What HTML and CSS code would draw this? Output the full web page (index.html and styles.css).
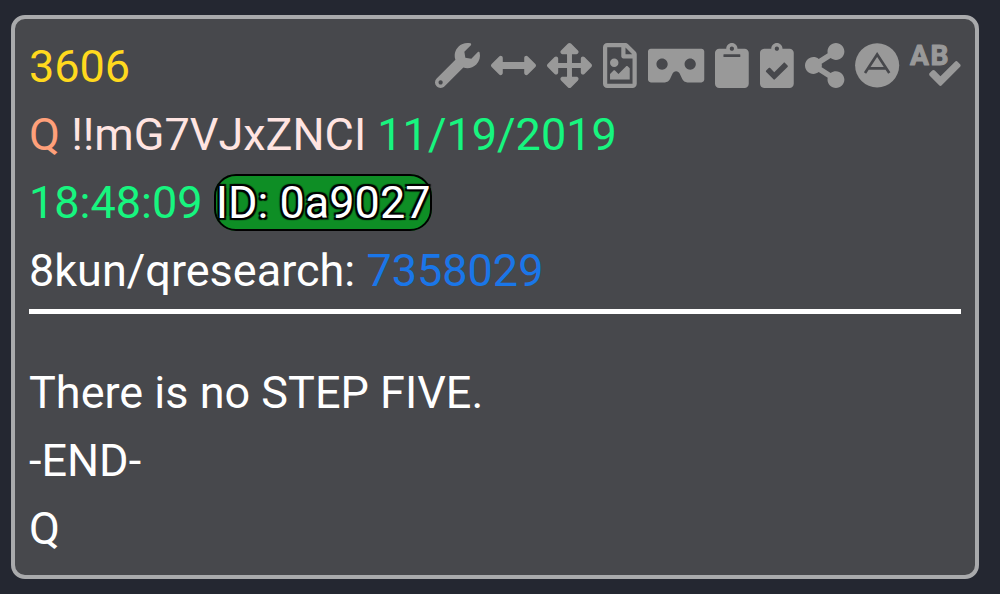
FILE: index.html
```html
<!DOCTYPE html>
<html lang="en">
<head>
    <meta charset="UTF-8">
    <meta name="viewport" content="width=device-width, initial-scale=1.0">
    <title>3606</title>
    <link rel="stylesheet" href="styles.css">
</head>
<body>
    <article class="post">
        <header class="post-header">
            <div class="title-row">
                <span class="number">3606</span>
                <div class="tools">
                    <button type="button" class="tool" aria-label="Tools">
                        <svg viewBox="0 0 512 512"><path d="M507.73 109.1c-2.24-9.03-13.54-12.09-20.12-5.51l-74.36 74.36-67.88-11.31-11.31-67.88 74.36-74.36c6.62-6.62 3.43-17.9-5.66-20.16-47.38-11.74-99.55.91-136.58 37.93-39.64 39.64-50.55 97.1-34.05 147.2L18.74 402.76c-24.99 24.99-24.99 65.51 0 90.5 24.99 24.99 65.51 24.99 90.5 0l213.21-213.21c50.12 16.71 107.47 5.68 147.37-34.22 37.07-37.07 49.7-89.32 37.91-136.73zM64 472c-13.25 0-24-10.75-24-24 0-13.26 10.75-24 24-24s24 10.74 24 24c0 13.25-10.75 24-24 24z"/></svg>
                    </button>
                    <button type="button" class="tool" aria-label="Widen">
                        <svg viewBox="0 0 512 512"><path d="M377.941 169.941V216H134.059v-46.059c0-21.382-25.851-32.09-40.971-16.971L7.029 239.029c-9.373 9.373-9.373 24.568 0 33.941l86.059 86.059c15.119 15.119 40.971 4.411 40.971-16.971V296h243.882v46.059c0 21.382 25.851 32.09 40.971 16.971l86.059-86.059c9.373-9.373 9.373-24.568 0-33.941l-86.059-86.059c-15.119-15.12-40.971-4.412-40.971 16.97z"/></svg>
                    </button>
                    <button type="button" class="tool" aria-label="Expand">
                        <svg viewBox="0 0 512 512"><path d="M352.201 425.775l-79.196 79.196c-9.373 9.373-24.568 9.373-33.941 0l-79.196-79.196c-15.119-15.119-4.411-40.971 16.971-40.97h51.162L228 284H127.196v51.162c0 21.382-25.851 32.09-40.971 16.971L7.029 272.937c-9.373-9.373-9.373-24.569 0-33.941L86.225 159.8c15.119-15.119 40.971-4.411 40.971 16.971V228H228V127.196h-51.23c-21.382 0-32.09-25.851-16.971-40.971l79.196-79.196c9.373-9.373 24.568-9.373 33.941 0l79.196 79.196c15.119 15.119 4.411 40.971-16.971 40.971h-51.162V228h100.804v-51.162c0-21.382 25.851-32.09 40.97-16.971l79.196 79.196c9.373 9.373 9.373 24.569 0 33.941L425.773 352.2c-15.119 15.119-40.971 4.411-40.97-16.971V284H284v100.804h51.23c21.382 0 32.09 25.851 16.971 40.971z"/></svg>
                    </button>
                    <button type="button" class="tool" aria-label="Save as image">
                        <svg viewBox="0 0 384 512"><path d="M369.9 97.9L286 14C277 5 264.8-.1 252.1-.1H48C21.5 0 0 21.5 0 48v416c0 26.5 21.5 48 48 48h288c26.5 0 48-21.5 48-48V131.9c0-12.7-5.1-25-14.1-34zM332.1 128H256V51.9l76.1 76.1zM48 464V48h160v104c0 13.3 10.7 24 24 24h104v288H48zm32-48h224V288l-23.5-23.5c-4.7-4.7-12.3-4.7-17 0L176 352l-39.5-39.5c-4.7-4.7-12.3-4.7-17 0L80 352v64zm48-240c-26.5 0-48 21.5-48 48s21.5 48 48 48 48-21.5 48-48-21.5-48-48-48z"/></svg>
                    </button>
                    <button type="button" class="tool" aria-label="View">
                        <svg viewBox="0 0 640 512"><path d="M608 64H32C14.33 64 0 78.33 0 96v320c0 17.67 14.33 32 32 32h160.22c25.19 0 48.03-14.77 58.36-37.74l27.74-61.64C286.21 331.08 302.35 320 320 320s33.79 11.08 41.68 28.62l27.74 61.64C399.75 433.23 422.6 448 447.78 448H608c17.67 0 32-14.33 32-32V96c0-17.67-14.33-32-32-32zM160 304c-35.35 0-64-28.65-64-64s28.65-64 64-64 64 28.65 64 64-28.65 64-64 64zm320 0c-35.35 0-64-28.65-64-64s28.65-64 64-64 64 28.65 64 64-28.65 64-64 64z"/></svg>
                    </button>
                    <button type="button" class="tool" aria-label="Copy">
                        <svg viewBox="0 0 384 512"><path d="M384 112v352c0 26.51-21.49 48-48 48H48c-26.51 0-48-21.49-48-48V112c0-26.51 21.49-48 48-48h80c0-35.29 28.71-64 64-64s64 28.71 64 64h80c26.51 0 48 21.49 48 48zM192 40c-13.255 0-24 10.745-24 24s10.745 24 24 24 24-10.745 24-24-10.745-24-24-24m96 114v-20a6 6 0 0 0-6-6H102a6 6 0 0 0-6 6v20a6 6 0 0 0 6 6h180a6 6 0 0 0 6-6z"/></svg>
                    </button>
                    <button type="button" class="tool" aria-label="Copy checked">
                        <svg viewBox="0 0 384 512"><path d="M336 64h-80c0-35.3-28.7-64-64-64s-64 28.7-64 64H48C21.5 64 0 85.5 0 112v352c0 26.5 21.5 48 48 48h288c26.5 0 48-21.5 48-48V112c0-26.5-21.5-48-48-48zM192 40c13.3 0 24 10.7 24 24s-10.7 24-24 24-24-10.7-24-24 10.7-24 24-24zm121.2 231.8l-143 141.8c-4.7 4.7-12.3 4.6-17-.1l-82.6-83.3c-4.7-4.7-4.6-12.3.1-17L99.1 285c4.7-4.7 12.3-4.6 17 .1l46 46.4 106-105.2c4.7-4.7 12.3-4.6 17 .1l28.2 28.4c4.7 4.8 4.6 12.3-.1 17z"/></svg>
                    </button>
                    <button type="button" class="tool" aria-label="Share">
                        <svg viewBox="0 0 448 512"><path d="M352 320c-22.608 0-43.387 7.819-59.79 20.895l-102.486-64.054a96.551 96.551 0 0 0 0-41.683l102.486-64.054C308.613 184.181 329.392 192 352 192c53.019 0 96-42.981 96-96S405.019 0 352 0s-96 42.981-96 96c0 7.158.79 14.13 2.276 20.841L155.79 180.895C139.387 167.819 118.608 160 96 160c-53.019 0-96 42.981-96 96s42.981 96 96 96c22.608 0 43.387-7.819 59.79-20.895l102.486 64.054A96.301 96.301 0 0 0 256 416c0 53.019 42.981 96 96 96s96-42.981 96-96-42.981-96-96-96z"/></svg>
                    </button>
                    <button type="button" class="tool" aria-label="Archive">
                        <svg viewBox="0 0 504 512">
                            <circle cx="252" cy="254" r="251"/>
                            <path class="mark" d="M114 342L252 130L390 342M148 288H350"/>
                        </svg>
                    </button>
                    <button type="button" class="tool" aria-label="Spell check">
                        <svg viewBox="0 0 576 512">
                            <text class="letters" x="0 234" y="246">AB</text>
                            <path d="M569.9 240.8l-28.1-28.8c-8.2-8.2-21.4-8.2-29.5 0L346.5 379.6l-64.6-65.8c-8.1-8.2-21.3-8.2-29.5 0l-28.5 28.8c-8.1 8.2-8.1 21.5 0 29.7l107.6 109.5c8.1 8.2 21.3 8.2 29.5 0l209-211.3c8.1-8.2 8.1-21.5-.1-29.7z"/>
                        </svg>
                    </button>
                </div>
            </div>
            <div class="meta">
                <span class="name">Q</span>
                <span class="trip">!!mG7VJxZNCI</span>
                <time class="date" datetime="2019-11-19T18:48:09">11/19/2019<br>18:48:09</time>
                <span class="user-id">ID: 0a9027</span>
            </div>
            <div class="source">8kun/qresearch: <a href="#" class="source-link">7358029</a></div>
        </header>
        <div class="post-body">
            There is no STEP FIVE.<br>
            -END-<br>
            Q
        </div>
    </article>
</body>
</html>
```

FILE: styles.css
```css
body {
    margin: 0;
    padding: 15px 21px 15px 11px;
    background-color: #242731;
    color: #fff;
    font-family: Roboto, 'Liberation Sans', sans-serif;
    font-size: 45px;
    line-height: 68px;
}
.post {
    padding: 14px 14px 12px;
    background-color: #47484c;
    border: 4px solid #a9aaac;
    border-radius: 14px;
}
.post-header {
    padding-bottom: 4px;
    border-bottom: 5px solid #fff;
}
.title-row {
    display: flex;
    justify-content: space-between;
    align-items: center;
}
.number {
    color: #ffd91e;
}
.tools {
    display: flex;
    gap: 11px;
    padding-bottom: 4px;
}
.tool {
    display: block;
    margin: 0;
    padding: 0;
    border: none;
    background: none;
    color: #999;
    cursor: pointer;
}
.tool:hover {
    color: #fff;
}
.tool svg {
    display: block;
    height: 45px;
    fill: currentColor;
    overflow: visible;
}
.tool .mark {
    fill: none;
    stroke: #47484c;
    stroke-width: 30px;
}
.tool .letters {
    font-family: Roboto, 'Liberation Sans', sans-serif;
    font-size: 320px;
    font-weight: 700;
    stroke: currentColor;
    stroke-width: 12px;
    stroke-linejoin: round;
}
.name {
    color: #ffa07a;
}
.trip {
    color: #ffe4e1;
}
.date {
    color: #17f57f;
}
.user-id {
    background-color: #0e8e25;
    border: 2px solid #000;
    border-radius: 22px;
    text-shadow: 2px 2px 1px #000, -2px 2px 1px #000, 2px -2px 1px #000, -2px -2px 1px #000;
}
.source-link {
    color: #1a76e8;
    text-decoration: none;
}
.post-body {
    padding-top: 45px;
}
```
